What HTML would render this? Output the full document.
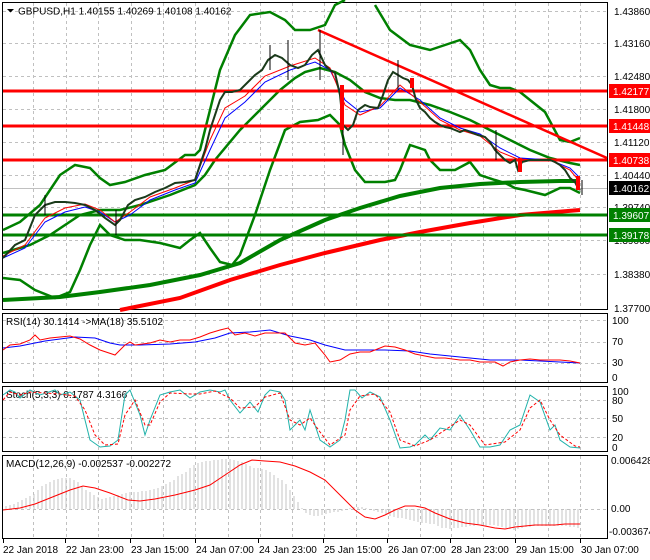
<!DOCTYPE html>
<html><head><meta charset="utf-8"><style>
body{margin:0;background:#fff;width:650px;height:560px;overflow:hidden;font-family:"Liberation Sans",sans-serif}
svg{display:block}
text{font-family:"Liberation Sans",sans-serif;font-size:10px;fill:#000}
</style></head><body>
<svg width="650" height="560" viewBox="0 0 650 560">
<rect width="650" height="560" fill="#fff"/>
<g fill="none" stroke="#000" stroke-width="1">
<rect x="2.5" y="2.5" width="605" height="307"/>
<rect x="2.5" y="313.5" width="605" height="69"/>
<rect x="2.5" y="386.5" width="605" height="65"/>
<rect x="2.5" y="455.5" width="605" height="83"/>
</g>
<g stroke="#c0c0c0" stroke-dasharray="3,3" stroke-width="1">
<path d="M33.5 3V309M66.5 3V309M98.5 3V309M131.5 3V309M163.5 3V309M195.5 3V309M228.5 3V309M260.5 3V309M292.5 3V309M324.5 3V309M356.5 3V309M388.5 3V309M420.5 3V309M451.5 3V309M483.5 3V309M515.5 3V309M548.5 3V309M580.5 3V309"/>
<path d="M33.5 314V382M66.5 314V382M98.5 314V382M131.5 314V382M163.5 314V382M195.5 314V382M228.5 314V382M260.5 314V382M292.5 314V382M324.5 314V382M356.5 314V382M388.5 314V382M420.5 314V382M451.5 314V382M483.5 314V382M515.5 314V382M548.5 314V382M580.5 314V382"/>
<path d="M33.5 387V451M66.5 387V451M98.5 387V451M131.5 387V451M163.5 387V451M195.5 387V451M228.5 387V451M260.5 387V451M292.5 387V451M324.5 387V451M356.5 387V451M388.5 387V451M420.5 387V451M451.5 387V451M483.5 387V451M515.5 387V451M548.5 387V451M580.5 387V451"/>
<path d="M33.5 456V538M66.5 456V538M98.5 456V538M131.5 456V538M163.5 456V538M195.5 456V538M228.5 456V538M260.5 456V538M292.5 456V538M324.5 456V538M356.5 456V538M388.5 456V538M420.5 456V538M451.5 456V538M483.5 456V538M515.5 456V538M548.5 456V538M580.5 456V538"/>
<path d="M3 11.5H607M3 43.5H607M3 76.5H607M3 109.5H607M3 142.5H607M3 175.5H607M3 207.5H607M3 240.5H607M3 274.5H607"/>
<path d="M3 320.5H607M3 342.5H607M3 363.5H607M3 400.5H607M3 418.5H607M3 437.5H607M3 509.5H607"/>
</g>
<path d="M3 188.5H607" stroke="#c0c0c0"/>
<polyline fill="none" stroke="#008000" stroke-width="4" points="3,300 60,297 100,292 150,285 200,275 240,263 280,240 325,220 360,208 400,196 440,188 480,184 520,182 560,181 580,181"/>
<polyline fill="none" stroke="#ff0000" stroke-width="4" points="120,310 180,298 230,280 280,265 325,253 380,240 420,232 470,223 520,215 580,210"/>
<g fill="none" stroke="#008000" stroke-width="2.5">
<polyline points="3,230 20,222 40,205 60,175 75,165 90,168 100,178 110,185 125,182 145,175 165,170 185,155 195,155 200,150 210,110 220,70 235,35 250,15 270,12 285,20 295,30 310,30 325,25 335,5 345,0"/>
<polyline points="375,5 390,30 410,45 430,50 445,45 460,40 470,50 480,70 490,85 500,88 510,88 520,92 530,100 545,112 560,140 570,142 580,138"/>
<polyline points="3,278 20,280 35,290 55,298 70,292 80,270 90,245 100,225 110,235 125,240 140,240 160,243 180,248 190,240 200,233 210,248 220,262 232,265 240,255 255,215 270,170 285,130 300,122 318,120 330,115 340,125 345,145 355,170 365,182 385,182 395,180 400,170 410,145 425,150 430,160 440,170 455,170 470,162 480,175 495,180 505,183 515,188 525,190 545,195 560,188 570,188 580,193"/>
<polyline points="3,253 30,245 50,235 80,215 100,210 120,210 140,205 170,195 195,185 205,175 215,160 240,130 260,110 280,90 295,78 305,72 320,68 335,72 350,80 365,92 380,98 395,100 410,100 430,105 450,112 470,120 490,130 510,140 530,150 550,158 570,163 580,165"/>
</g>
<g stroke-width="3">
<path d="M3 91H607M3 126H607M3 160H607" stroke="#ff0000"/>
<path d="M3 215H607M3 235H607" stroke="#008000"/>
</g>
<path d="M318 30L607 158" stroke="#ff0000" stroke-width="2.5"/>
<polyline fill="none" stroke="#0000ff" stroke-width="1" points="3,258 25,248 45,222 65,212 85,207 100,212 115,222 130,215 150,200 175,190 195,183 210,150 225,118 245,102 265,82 290,70 315,62 330,70 345,100 360,112 380,108 400,88 420,100 440,118 460,128 480,134 500,148 520,158 550,160 570,168 580,178"/>
<polyline fill="none" stroke="#ff0000" stroke-width="1" points="3,256 25,245 45,218 65,208 85,204 100,210 115,222 130,212 150,197 175,188 195,180 210,140 225,108 245,96 265,76 290,66 315,58 330,68 345,105 360,115 380,106 400,85 420,102 440,120 460,130 480,136 500,152 520,160 550,160 570,170 580,182"/>
<polyline fill="none" stroke="#1a3a1a" stroke-width="2" points="3,258 15,245 25,240 35,215 45,205 55,202 65,202 75,203 85,205 95,210 105,218 115,225 120,220 128,205 135,200 145,197 155,192 165,188 175,183 185,182 195,180 200,165 205,150 210,130 215,115 220,100 225,92 232,92 240,90 248,82 255,75 262,70 268,60 275,55 282,58 290,65 298,68 305,65 312,55 318,50 325,65 330,70 335,73 340,95 343,125 348,130 353,125 358,110 365,105 370,107 378,108 383,95 388,80 393,72 398,75 403,78 408,80 412,85 416,100 420,108 425,112 430,118 435,122 440,125 445,127 450,128 455,130 460,132 465,130 470,132 478,135 485,137 490,142 495,150 500,155 505,160 510,163 515,160 518,170 522,162 530,160 540,160 550,160 555,162 560,165 565,170 570,178 575,182 578,188 580,190"/>
<g stroke="#000" stroke-width="1"><path d="M343 95V155M320 30V80M288 40V80M398 60V90M116 210V235M582 180V195M45 195V215M270 45V70M496 130V160"/></g>
<g fill="#ff0000"><rect x="340" y="85" width="4" height="45"/><rect x="576" y="176" width="4" height="14"/><rect x="410" y="78" width="4" height="10"/><rect x="518" y="158" width="4" height="14"/></g>
<path d="M7 9h7l-3.5 3.5z" fill="#000"/>
<text x="18" y="14.5" font-size="11">GBPUSD,H1  1.40155 1.40269 1.40108 1.40162</text>
<g font-size="10">
<text x="614" y="15">1.43860</text><text x="614" y="47">1.43160</text><text x="614" y="80">1.42480</text>
<text x="614" y="113">1.41800</text><text x="614" y="146">1.41120</text><text x="614" y="179">1.40440</text>
<text x="614" y="211">1.39740</text><text x="614" y="244">1.39060</text><text x="614" y="278">1.38380</text><text x="614" y="312">1.37700</text>
</g>
<g font-size="10">
<rect x="609" y="84" width="41" height="14" fill="#ff0000"/><text x="613" y="95" style="fill:#fff">1.42177</text>
<rect x="609" y="119" width="41" height="14" fill="#ff0000"/><text x="613" y="130" style="fill:#fff">1.41448</text>
<rect x="609" y="153" width="41" height="14" fill="#ff0000"/><text x="613" y="164" style="fill:#fff">1.40738</text>
<rect x="609" y="181" width="41" height="14" fill="#000"/><text x="613" y="192" style="fill:#fff">1.40162</text>
<rect x="609" y="208" width="41" height="14" fill="#008000"/><text x="613" y="219" style="fill:#fff">1.39607</text>
<rect x="609" y="228" width="41" height="14" fill="#008000"/><text x="613" y="239" style="fill:#fff">1.39178</text>
</g>
<text x="6" y="325" font-size="10">RSI(14) 30.1414  -&gt;MA(18) 35.5102</text>
<polyline fill="none" stroke="#0000ff" points="3,348 20,346 45,341 75,337 95,338 110,343 120,345 140,345 170,344 195,342 215,338 230,333 250,332 270,330 290,336 310,340 325,345 345,350 365,350 385,350 410,351 430,354 450,356 470,358 490,360 505,360 520,360 540,361 560,362 580,363"/>
<polyline fill="none" stroke="#ff0000" points="3,350 10,345 20,344 30,340 35,335 40,340 50,338 60,337 70,336 80,339 90,345 100,350 115,355 125,345 130,342 135,345 150,343 160,340 170,342 180,340 190,340 200,337 210,333 220,330 228,328 235,335 245,333 255,336 265,333 275,333 285,333 295,343 305,345 315,343 325,355 330,362 340,360 350,354 360,352 370,352 385,346 395,347 405,350 415,354 425,356 435,358 445,358 460,360 470,360 480,362 495,362 503,366 510,362 520,360 530,359 540,360 550,360 560,360 570,361 580,363"/>
<g font-size="10"><text x="612" y="324">100</text><text x="612" y="345">70</text><text x="612" y="366">30</text><text x="612" y="381">0</text></g>
<text x="6" y="398" font-size="10">Stoch(5,3,3) 0.1787 4.3166</text>
<polyline fill="none" stroke="#20b2aa" points="3,395 10,390 15,392 20,398 30,390 40,395 55,390 60,395 70,392 80,400 85,420 90,440 100,447 110,446 118,440 125,395 130,390 140,415 145,435 150,420 160,395 170,392 180,390 190,398 200,392 210,390 220,392 225,390 230,400 240,413 250,402 258,412 265,395 270,390 280,392 285,400 290,430 300,420 305,430 310,410 320,440 330,447 340,440 345,420 350,390 355,390 362,398 370,392 380,397 390,420 400,448 410,447 415,445 425,435 430,440 440,428 450,430 460,415 470,430 480,447 490,447 500,445 510,430 520,425 530,395 540,402 550,430 555,425 560,440 570,447 580,448"/>
<polyline fill="none" stroke="#ff0000" stroke-dasharray="3,2" points="3,400 10,392 20,395 30,392 45,393 60,394 75,396 85,410 95,435 105,445 118,444 125,415 135,400 145,425 150,425 160,402 170,393 190,394 200,394 215,391 230,398 240,408 255,407 265,397 280,393 290,420 300,425 310,418 320,432 330,445 345,435 350,410 360,396 375,394 390,412 400,440 415,446 430,440 445,430 460,420 470,425 485,445 505,442 520,430 530,408 540,400 550,420 560,435 575,446 580,447"/>
<g font-size="10"><text x="612" y="395">100</text><text x="612" y="404">80</text><text x="612" y="422">50</text><text x="612" y="441">20</text><text x="612" y="451">0</text></g>
<text x="6" y="467" font-size="10">MACD(12,26,9) -0.002537 -0.002272</text>
<g stroke="#c4c4c4" stroke-width="1">
<path d="M6 509V506M10 509V505M14 509V504M18 509V502M22 509V500M26 509V498M30 509V496M34 509V494M38 509V490M42 509V486M46 509V484M50 509V482M54 509V480M58 509V479M62 509V478M66 509V478M70 509V478M74 509V480M78 509V482M82 509V486M86 509V490M90 509V492M94 509V495M98 509V497M102 509V499M106 509V498M110 509V497M114 509V496M118 509V495M122 509V494M126 509V493M130 509V492M134 509V492M138 509V492M142 509V491M146 509V491M150 509V490M154 509V489M158 509V488M162 509V486M166 509V484M170 509V482M174 509V480M178 509V476M182 509V474M186 509V472M190 509V468M194 509V465M198 509V463M202 509V462M206 509V461M210 509V461M214 509V460M218 509V460M222 509V459M226 509V459M230 509V459M234 509V460M238 509V461M242 509V462M246 509V464M250 509V466M254 509V468M258 509V468M262 509V469M266 509V470M270 509V472M274 509V475M278 509V478M282 509V480M286 509V484M290 509V490M294 509V496M298 509V502M302 509V508M306 509V513M310 509V515M314 509V516M318 509V516M322 509V515M326 509V514M330 509V513M334 509V512M338 509V512M342 509V511M346 509V510M350 509V508M354 509V507M358 509V507M362 509V507M366 509V508M370 509V509M374 509V511M378 509V512M382 509V513M386 509V514M390 509V516M394 509V517M398 509V518M402 509V518M406 509V519M410 509V520M414 509V521M418 509V522M422 509V523M426 509V523M430 509V524M434 509V524M438 509V526M442 509V528M446 509V528M450 509V529M454 509V528M458 509V528M462 509V527M466 509V527M470 509V526M474 509V526M478 509V525M482 509V526M486 509V526M490 509V525M494 509V525M498 509V526M502 509V527M506 509V528M510 509V529M514 509V530M518 509V529M522 509V528M526 509V527M530 509V527M534 509V526M538 509V526M542 509V526M546 509V526M550 509V526M554 509V526M558 509V526M562 509V526M566 509V526M570 509V527M574 509V527M578 509V528"/>
</g>
<polyline fill="none" stroke="#ff0000" points="3,510 20,508 35,504 50,498 70,490 83,486 95,488 110,493 128,500 140,501 155,499 175,495 195,490 210,485 225,475 240,465 252,460 265,461 280,462 295,466 310,472 325,480 340,495 355,510 365,517 375,519 385,515 395,510 405,506 415,506 425,508 435,513 450,519 465,523 480,525 495,528 505,529 515,527 525,526 535,525 545,525 555,525 565,524 580,524"/>
<g font-size="10"><text x="611" y="464">0.006428</text><text x="611" y="512">0.00</text><text x="609" y="535">-0.003674</text></g>
<g stroke="#000"><path d="M3.5 539V543M65.5 539V543M130.5 539V543M195.5 539V543M258.5 539V543M323.5 539V543M387.5 539V543M450.5 539V543M515.5 539V543M580.5 539V543"/></g>
<g font-size="10">
<text x="3" y="553">22 Jan 2018</text><text x="66" y="553">22 Jan 23:00</text><text x="131" y="553">23 Jan 15:00</text>
<text x="196" y="553">24 Jan 07:00</text><text x="259" y="553">24 Jan 23:00</text><text x="324" y="553">25 Jan 15:00</text>
<text x="388" y="553">26 Jan 07:00</text><text x="451" y="553">28 Jan 23:00</text><text x="516" y="553">29 Jan 15:00</text><text x="581" y="553">30 Jan 07:00</text>
</g>
</svg>
</body></html>
